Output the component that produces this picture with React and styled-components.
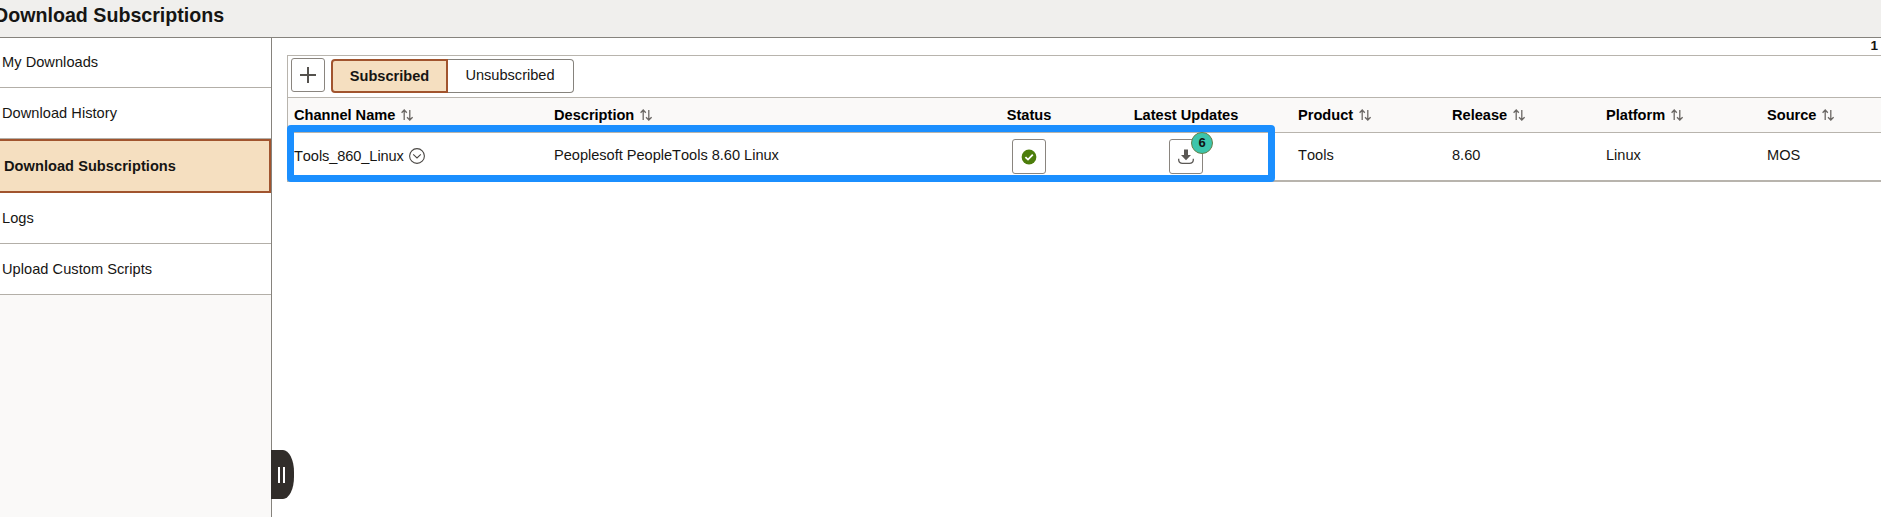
import React from 'react';
import styled, { createGlobalStyle, css } from 'styled-components';

const GlobalStyle = createGlobalStyle`
  * { box-sizing: border-box; }
  body {
    margin: 0;
    overflow: hidden;
    background: #fff;
    color: #161513;
    font-family: "Liberation Sans", Arial, sans-serif;
    font-size: 14.6px;
    line-height: 18px;
    font-kerning: none;
  }
  button { font: inherit; color: inherit; padding: 0; }
`;

const Page = styled.div`
  display: flex;
  flex-direction: column;
  width: 100%;
  height: 100vh;
  overflow: hidden;
`;

const TitleBar = styled.header`
  height: 38px;
  flex: none;
  background: #f0efed;
  border-bottom: 1px solid #86837d;
`;

const Title = styled.h1`
  margin: 0 0 0 -6px;
  padding-top: 4px;
  font-size: 19.65px;
  line-height: 22px;
  font-weight: 700;
`;

const Body = styled.div`
  display: flex;
  flex: 1;
  min-height: 0;
`;

const Sidebar = styled.nav`
  position: relative;
  width: 272px;
  flex: none;
  background: #faf9f8;
  border-right: 1px solid #86837d;
`;

const NavItem = styled.a`
  display: flex;
  align-items: center;
  height: ${(p) => p.$height}px;
  padding-left: 2px;
  padding-bottom: 1px;
  background: #fff;
  border-bottom: 1px solid #b3afa8;
  letter-spacing: 0.04px;
  ${(p) =>
    p.$active &&
    css`
      padding-left: 4px;
      padding-bottom: 0;
      background: #f5dfc0;
      border: 2px solid #a1542e;
      border-left: 0;
      font-weight: 700;
    `}
`;

const PaneHandle = styled.button`
  position: absolute;
  left: 271px;
  top: 412px;
  width: 23px;
  height: 49px;
  display: flex;
  justify-content: center;
  align-items: center;
  gap: 3px;
  padding-right: 2px;
  background: #312d2a;
  border: 0;
  border-radius: 0 11px 11px 0 / 0 22px 22px 0;
`;

const HandleBar = styled.span`
  width: 2px;
  height: 16px;
  background: #fff;
`;

const Main = styled.main`
  flex: 1;
  min-width: 0;
  padding-left: 15px;
`;

const RowCount = styled.div`
  height: 17px;
  padding-right: 3px;
  font-size: 13.5px;
  line-height: 15px;
  font-weight: 700;
  text-align: right;
`;

const Grid = styled.section`
  position: relative;
  border: 1px solid #b8b4ad;
  border-width: 1px 0 2px 1px;
`;

const Toolbar = styled.div`
  display: flex;
  align-items: flex-start;
  gap: 6px;
  height: 41px;
  padding: 2px 3px;
`;

const IconButton = styled.button`
  position: relative;
  display: flex;
  flex: none;
  align-items: center;
  justify-content: center;
  width: 34px;
  height: ${(p) => p.$height || 34}px;
  background: #fff;
  border: 1px solid #8a857f;
  border-radius: 3px;
`;

const Segmented = styled.div`
  display: flex;
  margin-top: 1px;
`;

const Segment = styled.button`
  width: ${(p) => p.$width}px;
  height: 34px;
  background: #fff;
  border: 1px solid #86837d;
  border-left: 0;
  border-radius: 0 4px 4px 0;
  padding: 0 1px 3px 0;
  ${(p) =>
    p.$active &&
    css`
      background: #f5dfc0;
      border: 2px solid #a1542e;
      border-radius: 4px 0 0 4px;
      font-weight: 700;
      padding: 0;
    `}
`;

const columns = css`
  display: grid;
  grid-template-columns: 260px 431px 100px 214px 154px 154px 161px 1fr;
`;

const HeaderRow = styled.div`
  ${columns}
  height: 36px;
  align-items: center;
  background: #faf9f8;
  border-top: 1px solid #b8b4ad;
  border-bottom: 1px solid #b8b4ad;
  color: #000;
  font-weight: 700;
`;

const DataRow = styled.div`
  ${columns}
  height: 47px;
  padding-top: 6px;
`;

const Cell = styled.div`
  display: flex;
  align-items: center;
  gap: ${(p) => p.$gap || 6}px;
  height: 34px;
  padding-left: ${(p) => (p.$center ? 0 : p.$pad || 5)}px;
  padding-bottom: ${(p) => p.$lift || 0}px;
  justify-content: ${(p) => (p.$center ? 'center' : 'flex-start')};
  letter-spacing: ${(p) => p.$track || 0}px;
`;

const ButtonCell = styled(Cell)`
  align-items: flex-start;
`;

const Badge = styled.span`
  position: absolute;
  left: 21px;
  top: -8px;
  width: 22px;
  height: 22px;
  border: 1px solid #66804a;
  border-radius: 50%;
  background: #3cc5ab;
  color: #111;
  font-size: 13px;
  line-height: 20px;
  font-weight: 700;
  text-align: center;
`;

const Highlight = styled.div`
  position: absolute;
  left: -1px;
  top: 69px;
  width: 988px;
  height: 57px;
  border: 7px solid #1b8fff;
  border-radius: 4px;
  pointer-events: none;
`;

const SortIcon = () => (
  <svg width="12" height="12" viewBox="0 0 12 12" fill="none" stroke="#6b6865" strokeWidth="1.3">
    <path d="M3.2 11V1M.6 3.8L3.2 1l2.6 2.8M8.8 1v10M6 8.2L8.8 11l2.8-2.8" />
  </svg>
);

const PlusIcon = () => (
  <svg width="16" height="16" viewBox="0 0 16 16" stroke="#55524e" strokeWidth="2">
    <path d="M8 0v16M0 8h16" />
  </svg>
);

const ChevronCircle = () => (
  <svg width="16" height="16" viewBox="0 0 16 16" fill="none" stroke="#4a4744" strokeWidth="1.1">
    <circle cx="8" cy="8" r="7.4" />
    <path d="M4.2 6.4L8 9.9l3.8-3.5" />
  </svg>
);

const CheckIcon = () => (
  <svg width="16" height="16" viewBox="0 0 16 16">
    <circle cx="8" cy="8" r="7.4" fill="#4c7d0b" />
    <path d="M4.4 8.1l2.6 2.5 4.8-5" fill="none" stroke="#fff" strokeWidth="1.8" />
  </svg>
);

const DownloadIcon = () => (
  <svg width="16" height="16" viewBox="0 0 16 16">
    <path d="M6 .5h4v5.6h3L8 11.2 3 6.1h3z" fill="#5b5855" />
    <path d="M.7 9.8v1.4q.4 3.2 3.8 3.2h7q3.4 0 3.8-3.2V9.8" fill="none" stroke="#5b5855" strokeWidth="1.3" />
  </svg>
);

const navItems = [
  { label: 'My Downloads', height: 50 },
  { label: 'Download History', height: 51 },
  { label: 'Download Subscriptions', height: 54, active: true },
  { label: 'Logs', height: 51 },
  { label: 'Upload Custom Scripts', height: 51 },
];

const headings = [
  { label: 'Channel Name', sort: true, pad: 6 },
  { label: 'Description', sort: true, pad: 6 },
  { label: 'Status', center: true },
  { label: 'Latest Updates', center: true },
  { label: 'Product', sort: true },
  { label: 'Release', sort: true },
  { label: 'Platform', sort: true },
  { label: 'Source', sort: true },
];

export default function App() {
  return (
    <Page>
      <GlobalStyle />
      <TitleBar>
        <Title>Download Subscriptions</Title>
      </TitleBar>
      <Body>
        <Sidebar>
          {navItems.map((item) => (
            <NavItem key={item.label} $height={item.height} $active={item.active}>
              {item.label}
            </NavItem>
          ))}
          <PaneHandle aria-label="Toggle side panel">
            <HandleBar />
            <HandleBar />
          </PaneHandle>
        </Sidebar>
        <Main>
          <RowCount>1</RowCount>
          <Grid>
            <Toolbar>
              <IconButton aria-label="Add"><PlusIcon /></IconButton>
              <Segmented>
                <Segment $width={117} $active>Subscribed</Segment>
                <Segment $width={126}>Unsubscribed</Segment>
              </Segmented>
            </Toolbar>
            <HeaderRow>
              {headings.map((h) => (
                <Cell key={h.label} $center={h.center} $pad={h.pad}>
                  {h.label}
                  {h.sort && <SortIcon />}
                </Cell>
              ))}
            </HeaderRow>
            <DataRow>
              <Cell $pad={6} $gap={5} $track={-0.09}>Tools_860_Linux <ChevronCircle /></Cell>
              <Cell $pad={6} $lift={2} $track={-0.02}>Peoplesoft PeopleTools 8.60 Linux</Cell>
              <ButtonCell $center>
                <IconButton $height={35} aria-label="Status"><CheckIcon /></IconButton>
              </ButtonCell>
              <ButtonCell $center>
                <IconButton $height={35} aria-label="Latest updates">
                  <DownloadIcon />
                  <Badge>6</Badge>
                </IconButton>
              </ButtonCell>
              <Cell $lift={2}>Tools</Cell>
              <Cell $lift={2}>8.60</Cell>
              <Cell $lift={2}>Linux</Cell>
              <Cell $lift={2}>MOS</Cell>
            </DataRow>
            <Highlight />
          </Grid>
        </Main>
      </Body>
    </Page>
  );
}
